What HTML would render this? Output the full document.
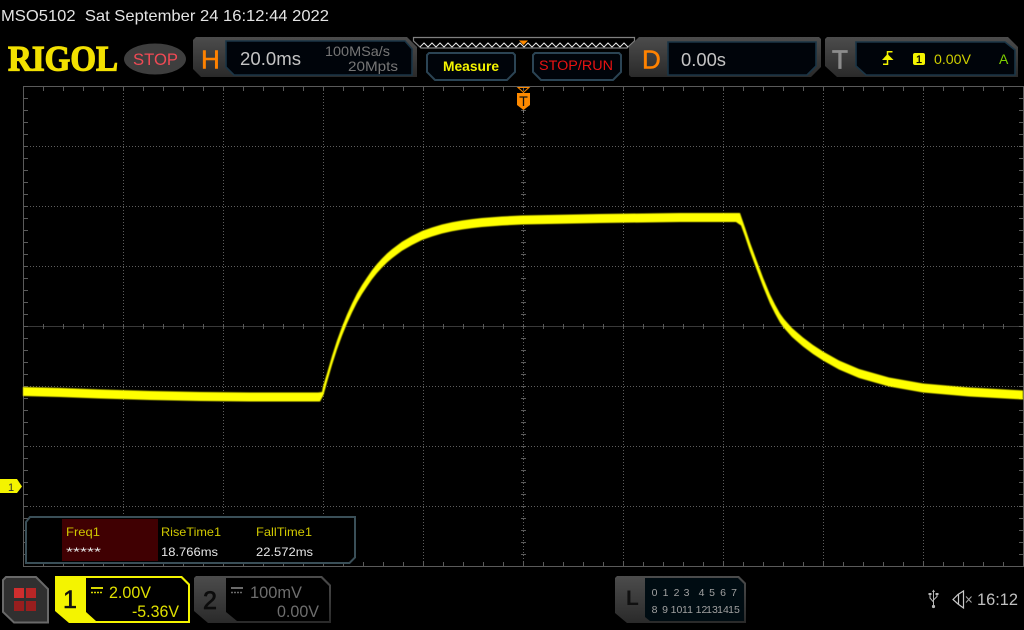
<!DOCTYPE html>
<html><head><meta charset="utf-8"><title>MSO5102</title>
<style>
html,body{margin:0;padding:0;background:#000;width:1024px;height:630px;overflow:hidden}
svg{display:block;font-family:"Liberation Sans",sans-serif}
</style></head><body>
<svg width="1024" height="630" viewBox="0 0 1024 630" xmlns="http://www.w3.org/2000/svg">
<defs>
<linearGradient id="g" x1="0" y1="0" x2="0" y2="1"><stop offset="0" stop-color="#4c4c4c"/><stop offset="1" stop-color="#2a2a2a"/></linearGradient>
<pattern id="tx" patternUnits="userSpaceOnUse" x="23" y="0" width="20" height="10"><rect x="0" y="0" width="1" height="10" fill="#5a5a5a"/></pattern>
<pattern id="ty" patternUnits="userSpaceOnUse" x="0" y="86" width="10" height="12"><rect x="0" y="0" width="10" height="1" fill="#5a5a5a"/></pattern>
<pattern id="dh" patternUnits="userSpaceOnUse" x="0" y="0" width="3" height="1"><rect width="1" height="1" fill="#5e5e5e"/></pattern>
<pattern id="dv" patternUnits="userSpaceOnUse" x="0" y="0" width="1" height="3"><rect width="1" height="1" fill="#5e5e5e"/></pattern>
<filter id="soft" x="-1%" y="-1%" width="102%" height="102%"><feGaussianBlur stdDeviation="0.4"/></filter>
</defs>

<text x="1" y="21" font-size="16" fill="#e4e4e4" textLength="328" lengthAdjust="spacingAndGlyphs" xml:space="preserve">MSO5102  Sat September 24 16:12:44 2022</text>

<text x="8" y="70.5" font-family="Liberation Serif,serif" font-weight="bold" font-size="36" fill="#f2e000" stroke="#f2e000" stroke-width="1.2" textLength="110" lengthAdjust="spacingAndGlyphs">RIGOL</text>
<ellipse cx="155" cy="59" rx="31" ry="15.5" fill="#3e3e3e"/>
<text x="133" y="65" font-size="17" fill="#f04a55" textLength="45" lengthAdjust="spacingAndGlyphs">STOP</text>

<!-- H panel -->
<path d="M196 37H407L417 47V77H201L193 69V40Z" fill="url(#g)"/>
<path d="M226 41H405L412 49V75H234L226 67Z" fill="#00040a" stroke="#1a3546" stroke-width="1.6"/>
<text x="201" y="68.5" font-size="26" fill="#ff8200" stroke="#ff8200" stroke-width=".5">H</text>
<text x="240" y="65" font-size="18" fill="#c4c4c4" textLength="61" lengthAdjust="spacingAndGlyphs">20.0ms</text>
<text x="325" y="56" font-size="14" fill="#767676" textLength="65" lengthAdjust="spacingAndGlyphs">100MSa/s</text>
<text x="348" y="71" font-size="14" fill="#767676" textLength="50" lengthAdjust="spacingAndGlyphs">20Mpts</text>

<!-- memory bar -->
<path d="M413.5 37.5H634.5V41L627 48H421L413.5 41Z" fill="#000" stroke="#808080" stroke-width="1.2"/>
<path d="M420 47L424 43L428 47L432 43L436 47L440 43L444 47L448 43L452 47L456 43L460 47L464 43L468 47L472 43L476 47L480 43L484 47L488 43L492 47L496 43L500 47L504 43L508 47L512 43L516 47L520 43L524 47L528 43L532 47L536 43L540 47L544 43L548 47L552 43L556 47L560 43L564 47L568 43L572 47L576 43L580 47L584 43L588 47L592 43L596 47L600 43L604 47L608 43L612 47L616 43L620 47L624 43L628 47" fill="none" stroke="#e4e4e4" stroke-width="1"/>
<path d="M519 40.500H528L523.500 45Z" fill="#ff8a00"/>

<!-- Measure / STOP-RUN -->
<path d="M429 53H513L515 55V72L507 80H435L427 72V55Z" fill="#00040a" stroke="#2b4454" stroke-width="2"/>
<text x="443" y="71" font-size="14" font-weight="bold" fill="#f4f400" textLength="56" lengthAdjust="spacingAndGlyphs">Measure</text>
<path d="M535 53H619L621 55V72L613 80H541L533 72V55Z" fill="#00040a" stroke="#2b4454" stroke-width="2"/>
<text x="539" y="70" font-size="13.500" fill="#e81212" textLength="74" lengthAdjust="spacingAndGlyphs">STOP/RUN</text>

<!-- D panel -->
<path d="M639 37H819L821 39V67L811 77H631L629 75V47Z" fill="url(#g)"/>
<path d="M668 42H816V66L807 75H668Z" fill="#00040a" stroke="#1a3546" stroke-width="1.6"/>
<text x="642" y="68.5" font-size="26" fill="#ff8200" stroke="#ff8200" stroke-width=".5">D</text>
<text x="681" y="66" font-size="18" fill="#c4c4c4" textLength="45" lengthAdjust="spacingAndGlyphs">0.00s</text>

<!-- T panel -->
<path d="M827 37H1008L1018 47V77H837L825 66V39Z" fill="url(#g)"/>
<path d="M856 42H1005L1015 50V75H866L856 66Z" fill="#00040a" stroke="#1a3546" stroke-width="1.600"/>
<text x="832" y="68.5" font-size="26" fill="#8c8c8c" stroke="#8c8c8c" stroke-width=".8">T</text>
<path d="M883 64.300H887.500V51.700H892.500" fill="none" stroke="#f2f200" stroke-width="1.500"/>
<path d="M882 60L887.500 54L893.500 60Z" fill="#f2f200"/>
<rect x="913" y="53" width="12" height="12" rx="2" fill="#f4f400"/>
<text x="919" y="63" font-size="11" fill="#000" stroke="#000" stroke-width=".3" text-anchor="middle">1</text>
<text x="934" y="64" font-size="14" fill="#cfcf00" textLength="37" lengthAdjust="spacingAndGlyphs">0.00V</text>
<text x="999" y="64" font-size="14" fill="#7ed000">A</text>

<!-- Grid -->
<g>
<rect x="123" y="87" width="1" height="479" fill="url(#dv)"/><rect x="223" y="87" width="1" height="479" fill="url(#dv)"/><rect x="323" y="87" width="1" height="479" fill="url(#dv)"/><rect x="423" y="87" width="1" height="479" fill="url(#dv)"/><rect x="623" y="87" width="1" height="479" fill="url(#dv)"/><rect x="723" y="87" width="1" height="479" fill="url(#dv)"/><rect x="823" y="87" width="1" height="479" fill="url(#dv)"/><rect x="923" y="87" width="1" height="479" fill="url(#dv)"/>
<rect x="523" y="87" width="1" height="479" fill="url(#dv)"/>
<rect x="24" y="146" width="1000" height="1" fill="url(#dh)"/><rect x="24" y="206" width="1000" height="1" fill="url(#dh)"/><rect x="24" y="266" width="1000" height="1" fill="url(#dh)"/><rect x="24" y="386" width="1000" height="1" fill="url(#dh)"/><rect x="24" y="446" width="1000" height="1" fill="url(#dh)"/><rect x="24" y="506" width="1000" height="1" fill="url(#dh)"/>
<rect x="24" y="326" width="1000" height="1" fill="#4c4c4c" opacity=".75"/>
<rect x="23" y="86" width="1001" height="1" fill="#5a5a5a"/>
<rect x="23" y="566" width="1001" height="1" fill="#5a5a5a"/>
<rect x="23" y="86" width="1" height="481" fill="#5a5a5a"/>
<rect x="1023" y="86" width="1" height="481" fill="#5a5a5a"/>
<rect x="24" y="87" width="1000" height="4" fill="url(#tx)"/>
<rect x="24" y="562" width="1000" height="4" fill="url(#tx)"/>
<rect x="24" y="324" width="1000" height="5" fill="url(#tx)"/>
<rect x="24" y="86" width="4" height="481" fill="url(#ty)"/>
<rect x="1019" y="86" width="4" height="481" fill="url(#ty)"/>
<rect x="521" y="86" width="5" height="481" fill="url(#ty)"/>
</g>

<!-- Trace -->
<path fill="#ffff00" filter="url(#soft)" d="M23 387L60 388L100 389.5L150 391L200 392L250 392.5L318 392.5L322 392L323 386.5L327 373.2L332 356L337 340.5L342 326.8L347 314.5L352 303.5L357 293.5L362 285L367 277.5L372 270.3L377 264L382 258.5L387 253.5L392 249.2L402 241.7L412 236L422 231L432 227.5L442 224.5L452 222.3L462 220.5L472 219.1L482 218L502 216.5L522 215.5L600 214L680 213L740 213L745 227.5L750 242.5L757 261.5L763 277.5L770 294.5L775 304.5L780 313.5L784 319L788 323.5L792 328L796 331.5L803 337.5L813 345L823 351.5L839 360.5L859 369L889 377.5L923 383.5L969 387.5L1023 390.5V399.5L969 396.5L923 392.5L889 386.5L859 378L839 369.5L823 360.5L813 354L803 346.5L796 340.5L792 337L788 332.5L784 328L780 322.5L775 313.5L770 303.5L763 286.5L757 270.5L750 251.5L745 236.5L741 225.5L736 222L680 222L600 223L522 224.5L502 225.5L482 227L472 228.1L462 229.5L452 231.3L442 233.5L432 236.5L422 240L412 245L402 250.7L392 258.2L387 262.5L382 267.5L377 273L372 279.3L367 286.5L362 294L357 302.5L352 312.5L347 323.5L342 335.8L337 349.5L332 365L327 382.2L323.5 395L320 401.5L250 401.5L200 401L150 400L100 398.5L60 397L23 396Z"/>

<!-- Trigger marker -->
<path d="M518 87.500H529L523.500 92.500Z" fill="none" stroke="#ff8a00"/>
<path d="M517 93H530V105L523.500 110L517 105Z" fill="#ff8a00"/>
<path d="M519.500 97H527.500M523.500 97V106" stroke="#111" stroke-width="1.300" fill="none"/>
<rect x="523" y="110" width="1" height="3" fill="#777"/>

<!-- Ch1 marker -->
<path d="M0 479H17L22 486.500L17 493H0Z" fill="#f4f400"/>
<text x="11" y="491" font-size="11" fill="#333" text-anchor="middle">1</text>

<!-- Measurement panel -->
<path d="M30 517H355V557.500L349.500 563H26V522Z" fill="#000" stroke="#3a4f58" stroke-width="2"/>
<rect x="62" y="519" width="96" height="42" fill="#400002"/>
<g font-size="12">
<text x="66" y="536" fill="#d0c800" textLength="34" lengthAdjust="spacingAndGlyphs">Freq1</text>
<text x="161" y="536" fill="#d0c800" textLength="60" lengthAdjust="spacingAndGlyphs">RiseTime1</text>
<text x="256" y="536" fill="#d0c800" textLength="56" lengthAdjust="spacingAndGlyphs">FallTime1</text>
<text x="66" y="556" fill="#e6e6e6" textLength="35" lengthAdjust="spacingAndGlyphs">*****</text>
<text x="161" y="556" fill="#e6e6e6" textLength="57" lengthAdjust="spacingAndGlyphs">18.766ms</text>
<text x="256" y="556" fill="#e6e6e6" textLength="57" lengthAdjust="spacingAndGlyphs">22.572ms</text>
</g>

<!-- Menu button -->
<path d="M6 577H36L48 589V622.500H14L3 612V580Z" fill="#303030" stroke="#696969" stroke-width="2"/>
<rect x="14" y="588" width="10" height="10" fill="#d02e2e"/><rect x="26" y="588" width="10" height="10" fill="#b82626"/>
<rect x="14" y="601" width="10" height="10" fill="#981e1e"/><rect x="26" y="601" width="10" height="10" fill="#981e1e"/>

<!-- CH1 -->
<path d="M55 576H182L190 584V623H69L55 611Z" fill="#f4f400"/>
<path d="M86 578H181L188 585V621H96L86 612Z" fill="#000"/>
<text x="63" y="608" font-size="25" fill="#111" stroke="#111" stroke-width=".6">1</text>
<rect x="91" y="587" width="12" height="2" fill="#d8d800"/>
<path d="M91 592.500H103" stroke="#d8d800" stroke-width="1.500" stroke-dasharray="2 1"/>
<text x="109" y="598" font-size="17" fill="#e0e000" textLength="42" lengthAdjust="spacingAndGlyphs">2.00V</text>
<text x="132" y="617" font-size="17" fill="#e0e000" textLength="47" lengthAdjust="spacingAndGlyphs">-5.36V</text>

<!-- CH2 -->
<path d="M196 576H322L331 585V623H208L194 611V578Z" fill="url(#g)"/>
<path d="M226 578H321L329 586V621H237L226 612Z" fill="#000"/>
<text x="203" y="609" font-size="25" fill="#0c0c0c" stroke="#0c0c0c" stroke-width=".8">2</text>
<rect x="231" y="587" width="12" height="2" fill="#6a6a6a"/>
<path d="M231 592.500H243" stroke="#6a6a6a" stroke-width="1.500" stroke-dasharray="2 1"/>
<text x="250" y="598" font-size="17" fill="#6e6e6e" textLength="52" lengthAdjust="spacingAndGlyphs">100mV</text>
<text x="277" y="617" font-size="17" fill="#6e6e6e" textLength="42" lengthAdjust="spacingAndGlyphs">0.00V</text>

<!-- L -->
<path d="M617 576H739L746 583V623H627L615 613V578Z" fill="url(#g)"/>
<path d="M645 578H738L744 584V621H650L645 617Z" fill="#000c12"/>
<text x="626" y="605" font-size="21" font-weight="bold" fill="#101010">L</text>
<g font-size="10.500" fill="#a0a0a0" text-anchor="middle">
<text x="654.500" y="596">0</text><text x="665.500" y="596">1</text><text x="676.500" y="596">2</text><text x="686.500" y="596">3</text><text x="701.500" y="596">4</text><text x="712" y="596">5</text><text x="723" y="596">6</text><text x="734" y="596">7</text>
<text x="654.500" y="613">8</text><text x="665" y="613">9</text><text x="676.500" y="613">10</text><text x="687.500" y="613">11</text><text x="701.500" y="613">12</text><text x="712" y="613">13</text><text x="723" y="613">14</text><text x="734" y="613">15</text>
</g>

<!-- USB -->
<g fill="none" stroke="#b8b8b8" stroke-width="1">
<path d="M933.500 591V606M933.500 602L930 598V595M933.500 600L937 596.500V595"/>
</g>
<path d="M933.500 589.500L935 592H932Z" fill="#b8b8b8"/>
<circle cx="933.500" cy="606.500" r="1.600" fill="#b8b8b8"/>
<rect x="928.500" y="593" width="3" height="2" fill="#b8b8b8"/><rect x="935.500" y="593" width="3" height="2" fill="#b8b8b8"/>

<!-- Speaker mute -->
<path d="M953 599.500L958 594.500L963.500 591V608L958 604L953 599.500ZM958.500 594.500V604.500" fill="none" stroke="#c8c8c8" stroke-width="1.200"/>
<path d="M966 596.500L971.500 602.500M971.500 596.500L966 602.500" stroke="#a8a8a8" stroke-width="1"/>
<text x="977" y="605" font-size="16.500" fill="#c0c0c0" textLength="41" lengthAdjust="spacingAndGlyphs">16:12</text>
</svg>
</body></html>
